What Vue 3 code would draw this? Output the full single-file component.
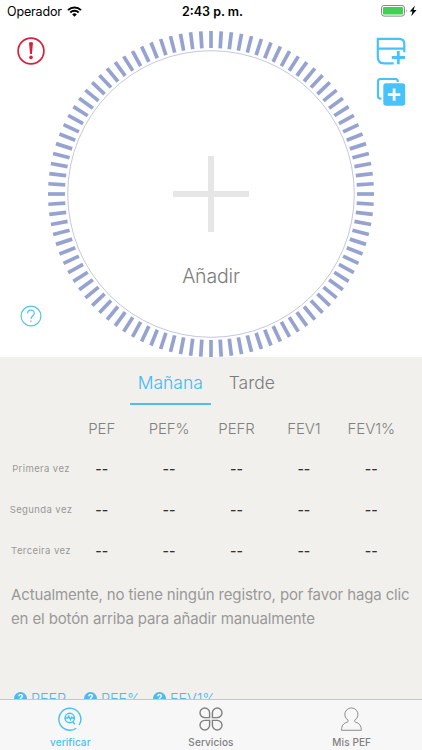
<template>
  <div class="screen">
    <header class="status-bar">
      <div class="carrier">
        <span class="carrier-name">Operador</span>
        <svg class="wifi" viewBox="0 0 15 11">
          <path d="M1 4.1a9.4 9.4 0 0 1 13 0" />
          <path d="M3.3 6.5a6.1 6.1 0 0 1 8.4 0" />
          <path class="wifi-dot" d="M7.5 10.8 5.2 8.4a3.3 3.3 0 0 1 4.6 0z" />
        </svg>
      </div>
      <span class="clock">2:43 p. m.</span>
      <svg class="battery" viewBox="0 0 37 12">
        <rect x=".5" y=".5" width="23" height="10.6" rx="2.6" fill="#fff" stroke="#888" />
        <rect x="2" y="2" width="20" height="7.6" rx="1.2" fill="#43ce55" />
        <path d="M25 4q1.4 1.7 0 3.4z" fill="#888" />
        <path d="M34 .6 28.8 6.4h2.7L30.2 11.2 35.5 5h-2.9z" fill="#000" />
      </svg>
    </header>

    <main class="measure">
      <div class="side">
        <svg class="alert" viewBox="0 0 28 28">
          <circle cx="14" cy="14" r="12.9" />
          <path d="M12 5.8q2-1.4 4 0L14.9 17h-1.8z" />
          <circle class="dot" cx="14" cy="20.4" r="1.8" />
        </svg>
        <svg class="help" viewBox="0 0 22 22">
          <circle cx="11" cy="11" r="9.9" />
          <path d="M7.6 8.5c0-4.5 6.7-4.5 6.7-.3 0 2.4-3.3 2.7-3.3 5.8" />
          <path d="M11 15.4v1.6" />
        </svg>
      </div>

      <svg class="dial" viewBox="0 0 326 326">
        <line
          v-for="n in TICKS"
          :key="n"
          class="tick"
          x1="163"
          y1="0"
          x2="163"
          y2="17"
          :transform="`rotate(${(n * 360) / TICKS} 163 163)`"
        />
        <circle class="ring" cx="163" cy="163" r="143.3" />
        <path class="plus" d="M163 125v76M125 163h76" />
        <text class="dial-label" x="163" y="251.5" text-anchor="middle">Añadir</text>
      </svg>

      <div class="actions">
        <svg viewBox="0 0 30 30">
          <path d="M28.3 15.3V7Q28.3 1.8 23 1.8H1.8V20Q1.8 26.3 8 26.3H17.7M1.8 11.7h26.5" />
          <path class="bold" d="M22.3 14v13.2M15.8 20.5h13.2" />
        </svg>
        <svg viewBox="0 0 30 30">
          <path d="M5.4 20.7H4.5Q2 20.7 2 18.2V3.5Q2 .9 4.8 .9h14.4Q21.8 .9 21.8 3.4V4" />
          <rect class="solid" x="7.3" y="5.3" width="21.9" height="22.4" rx="2.7" />
          <path class="white" d="M18.1 10.4v12.4M11.9 16.6h12.4" />
        </svg>
      </div>
    </main>

    <section class="records">
      <nav class="tabs">
        <button
          v-for="tab in tabs"
          :key="tab"
          class="tab"
          :class="{ active: tab === activeTab }"
          @click="activeTab = tab"
        >
          <span>{{ tab }}</span>
        </button>
      </nav>

      <div class="grid">
        <span></span>
        <span v-for="col in columns" :key="col" class="col-name">{{ col }}</span>
        <template v-for="row in rows" :key="row">
          <span class="row-name">{{ row }}</span>
          <span v-for="col in columns" :key="col" class="value">--</span>
        </template>
      </div>

      <p class="hint">
        Actualmente, no tiene ningún registro, por favor haga clic<br />
        en el botón arriba para añadir manualmente
      </p>

      <div class="legend">
        <span v-for="item in legend" :key="item" class="legend-item">
          <span class="badge">?</span>{{ item }}
        </span>
      </div>
    </section>

    <footer class="tabbar">
      <a class="item selected">
        <svg viewBox="0 0 24 24">
          <path d="M18.2 21.2A11 11 0 1 1 21.2 18" />
          <circle cx="11.7" cy="11" r="4.7" />
          <path d="M14.8 14.7l2 2.6M7.2 11h2.4l1.2-1.8 1.6 3.3 1.4-2.4.8.9h1.4" />
        </svg>
        <span>verificar</span>
      </a>
      <a class="item">
        <svg viewBox="0 0 24 24">
          <path d="M10.6 10.6H5.9A4.8 4.8 0 1 1 10.6 5.8zM13.4 10.6h4.7A4.8 4.8 0 1 0 13.4 5.8zM10.6 13.4H5.9A4.8 4.8 0 1 0 10.6 18.2zM13.4 13.4h4.7A4.8 4.8 0 1 1 13.4 18.2z" />
        </svg>
        <span>Servicios</span>
      </a>
      <a class="item">
        <svg class="thin" viewBox="0 0 24 24">
          <path d="M8.1 13.2A6.6 6.6 0 1 1 14.7 13.2Q14.4 14.8 15.6 15.2C19.3 16.2 21.3 18.6 21.3 23.3H1.5C1.5 18.6 3.5 16.2 7.2 15.2Q8.4 14.8 8.1 13.2z" />
        </svg>
        <span>Mis PEF</span>
      </a>
    </footer>
  </div>
</template>

<script setup>
import { ref } from 'vue'

const TICKS = 100

const tabs = ['Mañana', 'Tarde']
const activeTab = ref('Mañana')

const columns = ['PEF', 'PEF%', 'PEFR', 'FEV1', 'FEV1%']
const rows = ['Primera vez', 'Segunda vez', 'Terceira vez']
const legend = ['PEFR', 'PEF%', 'FEV1%']
</script>

<style>
body {
  margin: 0;
}
</style>

<style scoped>
.screen {
  display: flex;
  flex-direction: column;
  width: 422px;
  height: 750px;
  overflow: hidden;
  background: #fff;
  color: #808080;
  font-family: Inter, 'Liberation Sans', sans-serif;
}

svg {
  display: block;
  fill: none;
}

/* status bar */
.status-bar {
  display: grid;
  grid-template-columns: 1fr auto 1fr;
  align-items: center;
  box-sizing: border-box;
  height: 22px;
  padding: 0 4px 0 7px;
  color: #000;
  font-size: 13px;
}

.carrier {
  display: flex;
  align-items: center;
  gap: 5px;
}

.carrier-name {
  font-size: 12.5px;
  letter-spacing: -0.15px;
}

.wifi {
  width: 15px;
  height: 11px;
  stroke: #000;
  stroke-width: 2;
}

.wifi-dot {
  fill: #000;
  stroke: none;
}

.clock {
  font-size: 12.5px;
  font-weight: 600;
}

.battery {
  justify-self: end;
  width: 37px;
  height: 12px;
}

/* dial */
.measure {
  display: flex;
  flex: none;
  justify-content: space-between;
  box-sizing: border-box;
  height: 335px;
  padding: 9px 15px 0 17px;
}

.side {
  display: flex;
  flex-direction: column;
  justify-content: space-between;
  box-sizing: border-box;
  width: 31px;
  padding: 6px 0 30px;
}

.alert {
  width: 28px;
  height: 28px;
  stroke: #dc1f39;
  stroke-width: 1.7;
}

.alert path,
.alert .dot {
  fill: #dc1f39;
  stroke: none;
}

.help {
  width: 22px;
  height: 22px;
  margin-left: 3px;
  stroke: #52c3f1;
  stroke-width: 1.2;
}

.dial {
  width: 326px;
  height: 326px;
  margin: 0 1px 0 -1px;
}

.tick {
  stroke: #96a3d0;
  stroke-width: 3.7;
}

.ring {
  stroke: #b4b9d7;
  stroke-width: 0.8;
}

.plus {
  stroke: #e6e6e6;
  stroke-width: 6;
}

.dial-label {
  fill: #7c7c7c;
  font-size: 19.5px;
  font-weight: 300;
  letter-spacing: -0.15px;
}

.actions {
  display: flex;
  flex-direction: column;
  gap: 11px;
  width: 31px;
  padding-top: 6px;
}

.actions svg {
  width: 30px;
  height: 30px;
  stroke: #47c2fa;
  stroke-width: 2.2;
}

.actions .bold {
  stroke-width: 2.8;
}

.actions .solid {
  fill: #47c2fa;
  stroke: none;
}

.actions .white {
  stroke: #fff;
  stroke-width: 2.8;
}

/* records */
.records {
  flex: 1;
  min-height: 0;
  overflow: hidden;
  background: #f2f0ec;
}

.tabs {
  display: flex;
  justify-content: center;
  height: 48px;
}

.tab {
  box-sizing: border-box;
  width: 81.5px;
  padding: 4px 0 0;
  border: 0;
  border-bottom: 2px solid transparent;
  background: none;
  color: #7c7c7c;
  font: 300 17.5px Inter, sans-serif;
}

.tab.active {
  border-color: #4bbfef;
  color: #3fbaf0;
}

.grid {
  display: grid;
  grid-template-columns: 68px repeat(5, 67.4px);
  grid-template-rows: 43px repeat(3, 41px);
  align-items: center;
  justify-items: center;
}

.col-name {
  padding-top: 3px;
  font-size: 15px;
  font-weight: 300;
  letter-spacing: -0.1px;
}

.row-name {
  padding-left: 14px;
  color: #999;
  font-size: 9.5px;
  letter-spacing: 0.4px;
  white-space: nowrap;
}

.value {
  padding-bottom: 1px;
  color: #333;
  font-size: 14px;
  font-weight: 500;
}

.hint {
  margin: 12px 0 0 11px;
  color: #999;
  font-size: 15px;
  letter-spacing: -0.13px;
  line-height: 24px;
  white-space: nowrap;
}

.legend {
  display: grid;
  grid-template-columns: 70px 69px auto;
  padding: 59px 0 0 14px;
  color: #45bbf0;
  font-size: 14.5px;
  font-weight: 300;
  letter-spacing: -0.1px;
}

.legend-item {
  display: flex;
  align-items: center;
  gap: 4px;
}

.badge {
  width: 13px;
  height: 13px;
  border-radius: 50%;
  background: #4bbbed;
  color: #fff;
  font-size: 10px;
  font-weight: 600;
  line-height: 13px;
  text-align: center;
}

/* bottom bar */
.tabbar {
  display: grid;
  flex: none;
  grid-template-columns: repeat(3, 1fr);
  box-sizing: border-box;
  height: 51px;
  border-top: 1px solid #c6c8c8;
  background: #f7f7f7;
}

.item {
  display: flex;
  flex-direction: column;
  align-items: center;
  gap: 5px;
  padding-top: 7px;
  color: #808080;
  font-size: 10px;
  font-weight: 500;
  letter-spacing: 0.1px;
  line-height: 12px;
}

.item svg {
  width: 24px;
  height: 24px;
  stroke: currentColor;
  stroke-width: 1.4;
}

.item .thin {
  stroke-width: 0.9;
}

.selected {
  color: #4bbfef;
}
</style>
